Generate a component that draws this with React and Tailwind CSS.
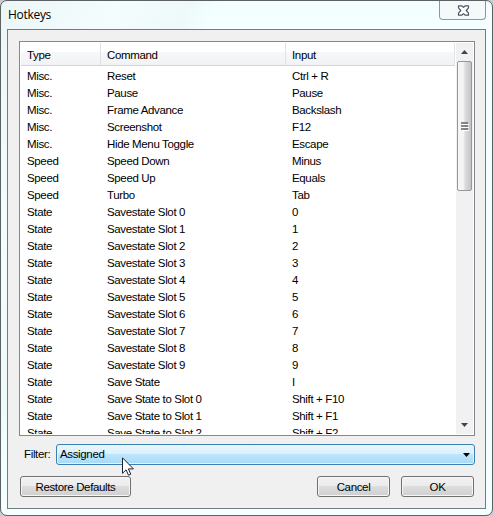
const rows = [
  ['Misc.', 'Reset', 'Ctrl + R'],
  ['Misc.', 'Pause', 'Pause'],
  ['Misc.', 'Frame Advance', 'Backslash'],
  ['Misc.', 'Screenshot', 'F12'],
  ['Misc.', 'Hide Menu Toggle', 'Escape'],
  ['Speed', 'Speed Down', 'Minus'],
  ['Speed', 'Speed Up', 'Equals'],
  ['Speed', 'Turbo', 'Tab'],
  ['State', 'Savestate Slot 0', '0'],
  ['State', 'Savestate Slot 1', '1'],
  ['State', 'Savestate Slot 2', '2'],
  ['State', 'Savestate Slot 3', '3'],
  ['State', 'Savestate Slot 4', '4'],
  ['State', 'Savestate Slot 5', '5'],
  ['State', 'Savestate Slot 6', '6'],
  ['State', 'Savestate Slot 7', '7'],
  ['State', 'Savestate Slot 8', '8'],
  ['State', 'Savestate Slot 9', '9'],
  ['State', 'Save State', 'I'],
  ['State', 'Save State to Slot 0', 'Shift + F10'],
  ['State', 'Save State to Slot 1', 'Shift + F1'],
  ['State', 'Save State to Slot 2', 'Shift + F2'],
];

function TitleBar() {
  return (
    <header className="flex h-7 shrink-0 items-start justify-between pl-[7px]">
      <h1 className="mt-[6px] font-['Open_Sans','Noto_Sans',sans-serif] text-[12px] leading-4 tracking-[-0.3px]">Hotkeys</h1>
      <button aria-label="Close" className="mr-[6px] flex h-[19px] w-[47px] items-center justify-center rounded-b-[4px] border border-t-0 border-[#8f9899] bg-[#f4fafa]">
        <svg width="13" height="11" viewBox="0 0 13 11" className="ml-px">
          <path d="M1.5 .8h3.2l1.8 1.6L8.3.8h3.2v2L9.2 5.5l2.3 2.7v2H8.3L6.5 8.6l-1.8 1.6H1.5v-2l2.3-2.7-2.3-2.7z" fill="#fff" stroke="#535666" strokeWidth="1.2" strokeLinejoin="round" />
        </svg>
      </button>
    </header>
  );
}

function ScrollBar() {
  return (
    <div className="ml-px flex w-[17px] shrink-0 flex-col items-center bg-[#f1f1f1]">
      <div className="flex h-[18px] w-full items-center justify-center">
        <svg width="7" height="4" viewBox="0 0 7 4"><path d="M0 4 3.5 0 7 4z" fill="#444" /></svg>
      </div>
      <div className="flex h-[130px] w-[15px] items-center justify-center rounded-[2px] border border-[#979797] bg-linear-to-r from-[#f5f5f5] from-40% via-[#dcdcde] via-55% to-[#c4c4c8]">
        <svg width="8" height="9" viewBox="0 0 8 9">
          <path d="M0 1h7M0 4h7M0 7h7" stroke="#666" strokeWidth="1.6" />
          <path d="M1 2.5h7M1 5.5h7M1 8.5h7" stroke="#fff" />
        </svg>
      </div>
      <div className="flex-1" />
      <div className="flex h-[19px] w-full items-center justify-center">
        <svg width="7" height="4" viewBox="0 0 7 4"><path d="M0 0 3.5 4 7 0z" fill="#444" /></svg>
      </div>
    </div>
  );
}

function HotkeyList() {
  return (
    <div className="flex h-[395px] w-[456px] overflow-hidden border border-[#828790] bg-white p-px">
      <div className="flex min-w-0 flex-1 flex-col">
        <div className="flex h-[23px] shrink-0 border-b border-[#d5d5d5] bg-[linear-gradient(#fff_40%,#f7f8fa_40%,#f1f2f4)] leading-[25px]">
          <div className="w-[80px] border-r border-[#e0e3e6] pl-[6px]">Type</div>
          <div className="w-[185px] border-r border-[#e0e3e6] pl-[6px]">Command</div>
          <div className="flex-1 border-r border-[#e0e3e6] pl-[6px]">Input</div>
        </div>
        <div className="min-h-0 flex-1 overflow-hidden pt-px">
          {rows.map(([type, command, input]) => (
            <div key={command} className="flex h-[17px] leading-[18px]">
              <div className="w-[80px] pl-[6px]">{type}</div>
              <div className="w-[185px] pl-[6px]">{command}</div>
              <div className="pl-[6px]">{input}</div>
            </div>
          ))}
        </div>
      </div>
      <ScrollBar />
    </div>
  );
}

function Button({ children, className }) {
  return (
    <button className={`h-[21px] rounded-[3px] border border-[#707070] bg-[linear-gradient(#f2f2f2,#ebebeb_50%,#dddddd_50%,#cfcfcf)] text-center leading-[20px] shadow-[inset_0_0_0_1px_#f6f6f6] ${className}`}>
      {children}
    </button>
  );
}

export default function App() {
  return (
    <div className="h-[516px] w-[493px] overflow-hidden bg-[#c9cccd] font-['Liberation_Sans',Arial,sans-serif] text-[11.5px] tracking-[-0.35px] text-black">
      <div className="flex h-[516px] w-[493px] flex-col rounded-[7px] border border-[#5d6163] bg-[linear-gradient(115deg,#edf6f7_0%,#f4fdfd_16%,#eef9f9_26%,#f4ffff_30%,#f4ffff)]">
        <TitleBar />
        <main className="ml-[6px] h-[480px] w-[479px] border border-[#757b7c] bg-[#f0f0f0] pt-[11px] pl-[11px]">
          <HotkeyList />
          <div className="mt-[8px] flex h-[21px] w-[456px] items-center">
            <label className="w-[37px] pl-[5px]">Filter:</label>
            <div className="relative flex h-[21px] flex-1 items-center justify-between rounded-[3px] border border-[#3c7fb1] bg-[linear-gradient(#eaf6fd,#d9f0fc_50%,#bee6fd_50%,#a7d9f5)] pr-[4px] pl-[3px] shadow-[inset_0_0_0_1px_#e3f4fc]">
              <span>Assigned</span>
              <svg width="7" height="4" viewBox="0 0 7 4"><path d="M0 0h7L3.5 4z" /></svg>
              <svg className="absolute top-[12px] left-[65px]" width="12" height="19" viewBox="0 0 12 19">
                <path d="M.5.8v15.5l3.6-3.5 2.4 5.4 2.3-1-2.4-5.3h5z" fill="#fff" stroke="#1d2233" />
              </svg>
            </div>
          </div>
          <div className="mt-[11px] flex pl-px">
            <Button className="w-[111px]">Restore Defaults</Button>
            <Button className="ml-[186px] w-[73px]">Cancel</Button>
            <Button className="ml-[11px] w-[73px]">OK</Button>
          </div>
        </main>
      </div>
    </div>
  );
}
